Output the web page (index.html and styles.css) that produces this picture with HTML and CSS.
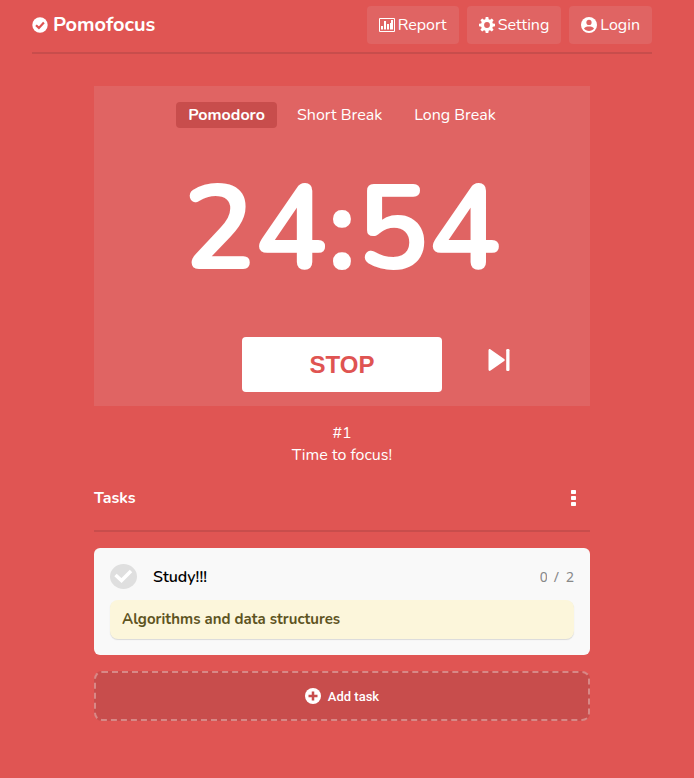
FILE: index.html
```html
<!DOCTYPE html>
<html lang="en">
<head>
<meta charset="utf-8">
<meta name="viewport" content="width=device-width, initial-scale=1">
<title>Pomofocus</title>
<link rel="stylesheet" href="styles.css">
</head>
<body>
<header class="header">
  <a class="brand" href="#">
    <svg class="brand-icon" viewBox="0 0 16 16" aria-hidden="true"><circle cx="8" cy="8" r="7.7" fill="#fff"/><path d="M4 8.200l2.900 2.700 5-5.400" fill="none" stroke="#df5452" stroke-width="2.200"/></svg>
    <span>Pomofocus</span>
  </a>
  <nav class="nav">
    <button class="nav-button" type="button">
      <svg class="icon" viewBox="0 0 16 16" aria-hidden="true"><path d="M.5 1.500h15v13H.5z" fill="none" stroke="#fff"/><path d="M2 12.500V9h2v3.500zM5 12.500V4h2v8.500zM8 12.500V7h2v5.500zM11 12.500V6h1v6.500zM12 12.500V3h2v9.500z" fill="#fff"/></svg>
      <span>Report</span>
    </button>
    <button class="nav-button" type="button">
      <svg class="icon" viewBox="0 0 16 16" aria-hidden="true"><path fill="#fff" fill-rule="evenodd" d="M6.700 0h2.600l.4 2.200 1.300.5 1.800-1.200 1.800 1.800-1.300 1.800.5 1.300 2.200.4v2.500l-2.200.4-.5 1.300 1.300 1.800-1.800 1.800-1.800-1.300-1.300.5-.4 2.200H6.700l-.4-2.200-1.300-.5-1.800 1.300-1.800-1.800L2.700 11l-.5-1.300L0 9.300V6.800l2.200-.4.500-1.300-1.300-1.800 1.800-1.800L5 2.700l1.300-.5zM8 5.100a2.900 2.900 0 100 5.800 2.900 2.900 0 000-5.800z"/></svg>
      <span>Setting</span>
    </button>
    <button class="nav-button" type="button">
      <svg class="icon" viewBox="0 0 16 16" aria-hidden="true"><circle cx="8" cy="8" r="8" fill="#fff"/><circle cx="8" cy="5.400" r="2.600" fill="#e06463"/><path d="M3 11.600C3.500 10 5.700 9.400 8 9.400s4.500.6 5 2.200C12 13 10.200 14 8 14s-4-1-5-2.400z" fill="#e06463"/></svg>
      <span>Login</span>
    </button>
  </nav>
</header>
<main class="main">
  <section class="timer" aria-label="Timer">
    <div class="tabs">
      <button class="tab tab-active" type="button">Pomodoro</button>
      <button class="tab" type="button">Short Break</button>
      <button class="tab" type="button">Long Break</button>
    </div>
    <div class="time">24:54</div>
    <div class="controls">
      <button class="stop" type="button">STOP</button>
      <button class="skip" type="button" aria-label="Skip">
        <svg class="skip-icon" viewBox="0 0 22 22" aria-hidden="true"><path d="M.5 1.500C.5.200 1.500-.4 2.600.4L16.200 10q1.200 1 0 2L2.600 21.600C1.500 22.400.5 21.800.5 20.500z" fill="#fff"/><rect x="18.200" width="3.300" height="22" rx="1.200" fill="#fff"/></svg>
      </button>
    </div>
  </section>
  <div class="status">
    <div>#1</div>
    <div>Time to focus!</div>
  </div>
  <section>
    <div class="tasks-head">
      <h2 class="tasks-title">Tasks</h2>
      <button class="menu" type="button" aria-label="Task menu">
        <svg class="menu-icon" viewBox="0 0 5 16" aria-hidden="true"><rect width="5" height="4" rx=".7" fill="#fff"/><rect y="6" width="5" height="4" rx=".7" fill="#fff"/><rect y="12" width="5" height="4" rx=".7" fill="#fff"/></svg>
      </button>
    </div>
    <article class="task">
      <div class="task-row">
        <button class="check" type="button" aria-label="Mark done">
          <svg class="check-icon" viewBox="0 0 27 25" aria-hidden="true"><ellipse cx="13.500" cy="12.500" rx="13.500" ry="12.500" fill="#dfdfdf"/><path d="M5.500 11l6 5.500 9.500-9.500" fill="none" stroke="#fff" stroke-width="3.500"/></svg>
        </button>
        <span class="task-name">Study!!!</span>
        <span class="count"><span class="count-done">0</span><span>/</span><span>2</span></span>
      </div>
      <p class="note">Algorithms and data structures</p>
    </article>
    <button class="add" type="button">
      <svg class="icon" viewBox="0 0 16 16" aria-hidden="true"><circle cx="8" cy="8" r="8" fill="#fff"/><path d="M8 3.500v9M3.500 8h9" stroke="#c84d4c" stroke-width="2.500"/></svg>
      <span>Add task</span>
    </button>
  </section>
</main>
</body>
</html>
```
FILE: styles.css
```css
* {
  box-sizing: border-box;
}

body {
  margin: 0;
  padding: 0 42px 56px 32px;
  background: #e05553;
  color: #fff;
  font: 16px/22px Nunito, Lato, sans-serif;
}

button {
  border: 0;
  padding: 0;
  background: none;
  color: inherit;
  font: inherit;
  cursor: pointer;
}

svg {
  display: block;
  flex: none;
}

.icon {
  width: 16px;
  height: 16px;
}

.header {
  display: flex;
  justify-content: space-between;
  max-width: 620px;
  margin: 0 auto;
  padding: 6px 0 8px;
  border-bottom: 2px solid #c84d4c;
}

.brand {
  display: flex;
  align-items: center;
  gap: 5px;
  color: #fff;
  font-size: 20px;
  font-weight: 700;
  text-decoration: none;
}

.brand-icon {
  width: 16px;
  height: 16px;
}

.nav {
  display: flex;
  gap: 8px;
}

.nav-button {
  display: flex;
  align-items: center;
  gap: 3px;
  height: 38px;
  padding: 0 12px;
  border-radius: 4px;
  background: #e06463;
}

.main {
  max-width: 496px;
  margin: 32px auto 0;
}

.timer {
  padding: 16px 0 14px;
  background: #e06463;
}

.tabs {
  display: flex;
  justify-content: center;
  gap: 8px;
}

.tab {
  height: 26px;
  padding: 0 12px;
  border-radius: 4px;
}

.tab-active {
  background: #c84d4c;
  font-weight: 700;
}

.time {
  padding: 22px 0 27px;
  font-size: 120px;
  font-weight: 700;
  line-height: 160px;
  text-align: center;
}

.controls {
  display: grid;
  grid-template-columns: 1fr 200px 1fr;
}

.stop {
  grid-column: 2;
  height: 55px;
  border-radius: 4px;
  background: #fff;
  color: #df5452;
  font: 700 24px "Liberation Sans", Arial, sans-serif;
}

.skip {
  justify-self: start;
  align-self: start;
  margin-left: 46px;
  padding-top: 12px;
}

.skip-icon {
  width: 22px;
  height: 22px;
}

.status {
  margin-top: 16px;
  text-align: center;
}

.tasks-head {
  display: flex;
  align-items: center;
  justify-content: space-between;
  height: 66px;
  padding-right: 14px;
  border-bottom: 2px solid #c84d4c;
}

.tasks-title {
  margin: 0;
  font-size: 16px;
  font-weight: 700;
}

.menu-icon {
  width: 5px;
  height: 16px;
}

.task {
  margin-top: 16px;
  padding: 16px;
  border-radius: 6px;
  background: #f9f9f9;
  color: #000;
}

.task-row {
  display: flex;
  align-items: center;
  gap: 16px;
  font-weight: 600;
}

.check-icon {
  width: 27px;
  height: 25px;
}

.task-name {
  flex: 1;
}

.count {
  display: flex;
  gap: 7px;
  color: #888;
  font-family: "Noto Sans", sans-serif;
  font-size: 14px;
  font-weight: 400;
}

.count-done {
  width: 7px;
  overflow: hidden;
}

.note {
  margin: 11px 0 0;
  padding: 8px 12px;
  border-radius: 8px;
  background: #fcf6db;
  box-shadow: 0 1px 1px #d9d9d9;
  color: #5e541f;
  font-size: 15px;
  font-weight: 700;
  line-height: 23px;
}

.add {
  display: flex;
  align-items: center;
  justify-content: center;
  gap: 7px;
  width: 100%;
  height: 50px;
  margin-top: 16px;
  border: 2px dashed #d88886;
  border-radius: 8px;
  background: #c84d4c;
  font: 500 13px Roboto, sans-serif;
}
```
